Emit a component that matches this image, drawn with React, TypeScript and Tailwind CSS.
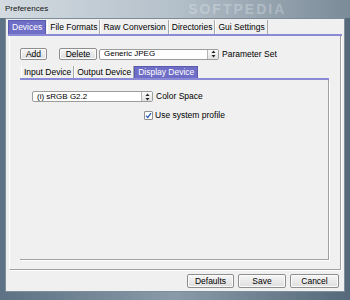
import React from 'react';

const font = { fontFamily: '"Liberation Sans", Arial, sans-serif' };

function Spinner() {
  return (
    <span className="flex h-full w-[11px] items-center justify-center border-l border-[#b5b5b5] bg-gradient-to-b from-[#fafafa] to-[#e2e2e2]">
      <svg width="5" height="8" viewBox="0 0 5 8">
        <path d="M2.5 0.5 L4.5 3 L0.5 3 Z" fill="#222" />
        <path d="M2.5 7.5 L4.5 5 L0.5 5 Z" fill="#222" />
      </svg>
    </span>
  );
}

function Combo({ value, width }: { value: string; width: string }) {
  return (
    <div className={`flex h-[11px] items-center rounded-[2px] border border-[#9c9c9c] bg-white ${width}`}>
      <span className="flex-1 truncate pl-[4px] text-[8px] leading-none text-black">{value}</span>
      <Spinner />
    </div>
  );
}

function Button({ label, width, height = 'h-[12px]' }: { label: string; width: string; height?: string }) {
  return (
    <button
      className={`flex items-center justify-center rounded-[2px] border border-[#8e8e8e] bg-gradient-to-b from-[#f6f6f6] to-[#dedede] text-[8.5px] leading-none text-black shadow-[inset_0_0_0_1px_#fcfcfc] ${width} ${height}`}
    >
      {label}
    </button>
  );
}

function Tab({ label, active, className = '' }: { label: string; active?: boolean; className?: string }) {
  return active ? (
    <div className={`flex items-center border border-b-0 border-[#5a5ab0] bg-[#6e6ec6] px-[3px] text-[8.5px] leading-none text-white ${className}`}>
      {label}
    </div>
  ) : (
    <div className={`flex items-center border-l border-r border-l-white border-r-[#a8a8a8] px-[2px] text-[8.5px] leading-none text-black ${className}`}>
      {label}
    </div>
  );
}

export default function App() {
  return (
    <div style={font} className="flex h-[300px] w-[350px] flex-col bg-gradient-to-r from-[#5d7284] via-[#8a9aa8] to-[#55697a]">
      {/* title bar */}
      <div className="flex h-[18px] items-center bg-gradient-to-r from-[#d3dbe1] via-[#b4c0ca] to-[#7b8b98] pl-[5px]">
        <span className="text-[8px] text-[#111]">Preferences</span>
        <span className="ml-[140px] text-[14px] font-bold tracking-[2px] text-white/25">SOFTPEDIA</span>
      </div>

      <div className="mx-[5px] mb-[8px] flex flex-1 flex-col border border-[#7d8d9a] bg-[#f0f0f0]">
        {/* main tabs */}
        <div className="flex h-[15px] pl-[2px] pt-[1px]">
          <Tab label="Devices" active className="mr-[1px]" />
          <Tab label="File Formats" />
          <Tab label="Raw Conversion" />
          <Tab label="Directories" />
          <Tab label="Gui Settings" />
        </div>
        <div className="mx-[2px] h-[2px] bg-[#8a8ad6]" />

        {/* main panel */}
        <div className="mx-[3px] flex h-[234px] flex-col border-b border-l border-r border-b-[#a0a0a0] border-l-white border-r-[#a0a0a0] pl-[10px] pr-[11px] pt-[12px] shadow-[1px_1px_0_#fff]">
          <div className="flex items-center">
            <Button label="Add" width="w-[27px]" />
            <Button label="Delete" width="w-[38px] ml-[12px]" />
            <Combo value="Generic JPEG" width="w-[120px] ml-[2px]" />
            <span className="ml-[3px] text-[8.5px] leading-none text-black">Parameter Set</span>
          </div>

          <div className="mt-[6px] flex h-[12px] pl-[1px]">
            <Tab label="Input Device" />
            <Tab label="Output Device" />
            <Tab label="Display Device" active />
          </div>
          <div className="h-[2px] bg-[#8a8ad6]" />

          {/* inner panel */}
          <div className="flex h-[180px] flex-col border-b border-r border-b-[#a0a0a0] border-r-[#a0a0a0] pl-[12px] pt-[11px] shadow-[1px_1px_0_#fff]">
            <div className="flex items-center gap-[3px]">
              <Combo value="(i) sRGB G2.2" width="w-[121px]" />
              <span className="text-[8.5px] leading-none text-black">Color Space</span>
            </div>
            <div className="ml-[112px] mt-[9px] flex items-center gap-[2px]">
              <span className="flex h-[9px] w-[9px] items-center justify-center rounded-[1px] border border-[#8f8f8f] bg-white">
                <svg width="7" height="7" viewBox="0 0 7 7">
                  <path d="M1 3.6 L2.8 5.5 L6 1.2" fill="none" stroke="#2a5fb5" strokeWidth="1.3" />
                </svg>
              </span>
              <span className="text-[8.5px] leading-none text-black">Use system profile</span>
            </div>
          </div>
        </div>

        {/* bottom buttons */}
        <div className="mt-[4px] flex justify-end gap-[4px] pr-[5px]">
          <Button label="Defaults" width="w-[47px]" height="h-[14px]" />
          <Button label="Save" width="w-[48px]" height="h-[14px]" />
          <Button label="Cancel" width="w-[49px]" height="h-[14px]" />
        </div>
      </div>
    </div>
  );
}
